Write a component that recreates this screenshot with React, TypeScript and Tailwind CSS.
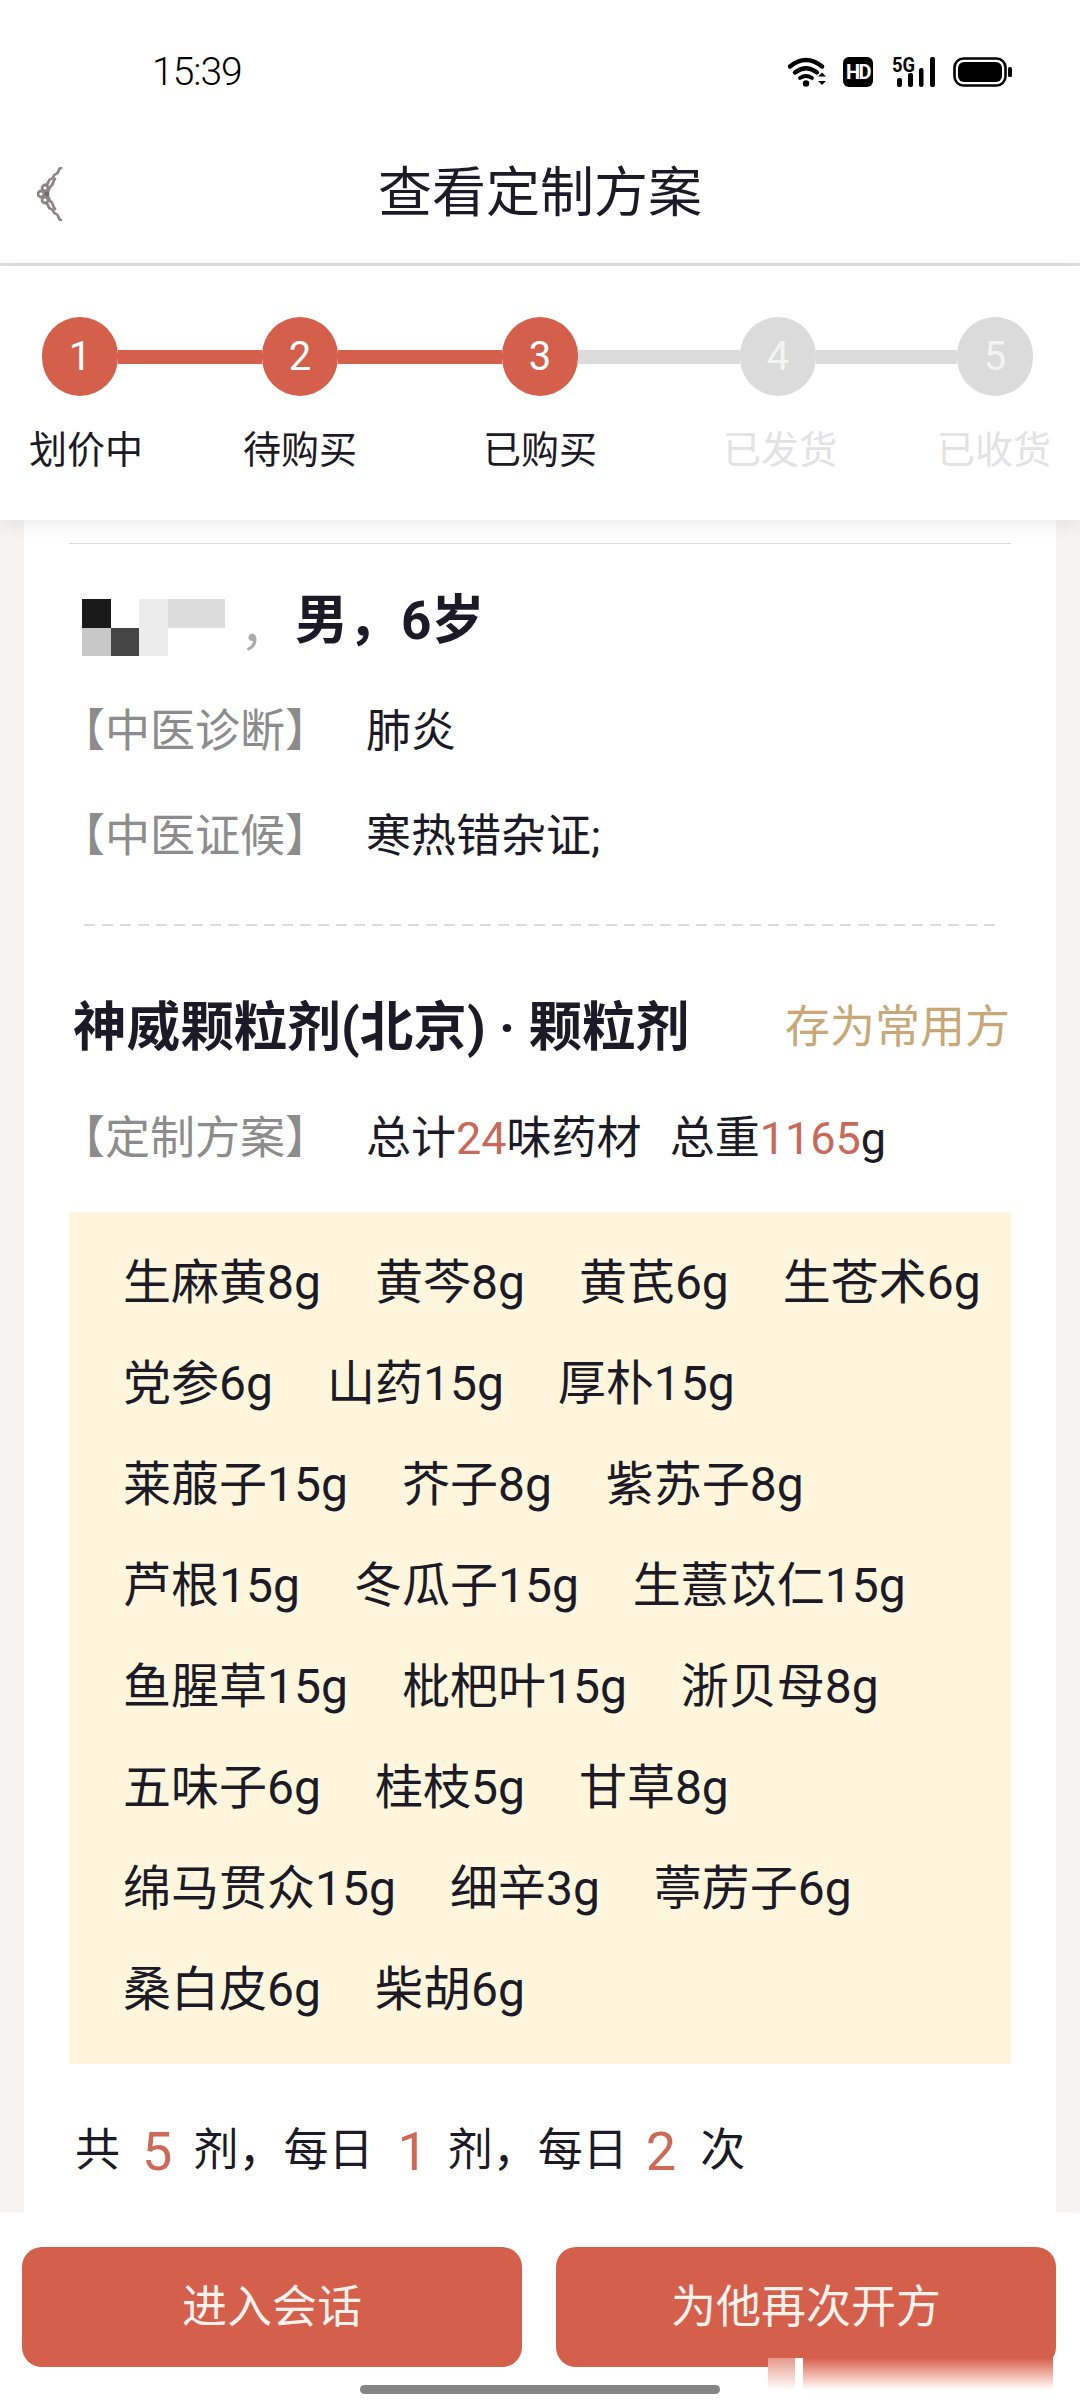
const steps = [
  { n: 1, label: "划价中", width: "w-[172px]", active: true },
  { n: 2, label: "待购买", width: "w-[256px]", active: true },
  { n: 3, label: "已购买", width: "w-[224px]", active: true },
  { n: 4, label: "已发货", width: "w-[256px]", active: false },
  { n: 5, label: "已收货", width: "w-[172px]", active: false },
]

const connectors = [
  { width: "w-[144px]", color: "bg-[#d45f4b]" },
  { width: "w-[164px]", color: "bg-[#d45f4b]" },
  { width: "w-[162px]", color: "bg-[#dbdbdb]" },
  { width: "w-[141px]", color: "bg-[#dbdbdb]" },
]

const herbs = [
  "生麻黄8g", "黄芩8g", "黄芪6g", "生苍术6g",
  "党参6g", "山药15g", "厚朴15g",
  "莱菔子15g", "芥子8g", "紫苏子8g",
  "芦根15g", "冬瓜子15g", "生薏苡仁15g",
  "鱼腥草15g", "枇杷叶15g", "浙贝母8g",
  "五味子6g", "桂枝5g", "甘草8g",
  "绵马贯众15g", "细辛3g", "葶苈子6g",
  "桑白皮6g", "柴胡6g",
]

const mosaic = [
  "bg-[#1a1a1a]", "bg-white", "bg-[#ececec]", "bg-[#dcdcdc]", "bg-[#dcdcdc]",
  "bg-[#c8c8c8]", "bg-[#454545]", "bg-[#ececec]", "bg-white", "bg-white",
]

function StatusIcons() {
  return (
    <div className="flex items-center gap-[16px] pr-[68px]">
      <svg width="39" height="30" viewBox="0 0 39 30" fill="none" stroke="#000" strokeLinecap="round">
        <path d="M2 9.5Q18-3.5 34 9.5" strokeWidth="4.4" />
        <path d="M7 15.5Q18 7 29 15.5" strokeWidth="4.4" />
        <path d="M12 21Q18 17 24 21" strokeWidth="3.8" />
        <circle cx="18" cy="26.5" r="3.2" fill="#000" stroke="none" />
        <path d="M30 19.5L34 15.5L38 19.5ZM30 24L38 24L34 28Z" fill="#000" stroke="none" />
      </svg>
      <div className="flex h-[30px] w-[30px] items-center justify-center rounded-[6px] bg-black text-[20px] leading-none font-bold tracking-[-1.5px] text-white">
        HD
      </div>
      <svg className="-mt-[4px]" width="46" height="34" viewBox="0 -4 46 34" fill="#000">
        <text x="3" y="15" fontSize="20" fontWeight="700" fontFamily="Roboto" textLength="23" lengthAdjust="spacingAndGlyphs">5G</text>
        <rect x="8" y="21" width="5" height="9" rx="2" />
        <rect x="19" y="16" width="5" height="14" rx="2" />
        <rect x="30" y="11" width="4.5" height="19" rx="2" />
        <rect x="41" y="0" width="5" height="30" rx="2" />
      </svg>
      <svg width="61" height="30" viewBox="0 0 61 30">
        <rect x="3.5" y="1.5" width="51" height="27" rx="9" fill="none" stroke="#000" strokeWidth="2.6" />
        <rect x="7" y="5" width="44" height="20" rx="6" fill="#000" />
        <rect x="57" y="10" width="4" height="10" rx="1.5" fill="#000" />
      </svg>
    </div>
  )
}

function BackKnot() {
  return (
    <svg width="26" height="54" viewBox="0 0 26 54" fill="none" stroke="#8b8686" strokeWidth="2.8" strokeLinecap="round">
      <path d="M24 1C20 2 23 6 19 7C15 8 18 11 14 12C10 13 13 16 9 18" />
      <path d="M24 53C20 52 23 48 19 47C15 46 18 43 14 42C10 41 13 38 9 36" />
      <path d="M18 12C15 15 17 18 13 20L10 27L13 34C17 36 15 39 18 42" />
      <circle cx="8" cy="21" r="3" />
      <circle cx="8" cy="33" r="3" />
      <circle cx="4" cy="27" r="3" />
      <circle cx="10" cy="27" r="2.4" fill="#6f6a6a" stroke="none" />
    </svg>
  )
}

function InfoRow({ label, children, className }: { label: string; children: React.ReactNode; className: string }) {
  return (
    <div className={`flex h-[60px] items-center pl-[36px] text-[45px] ${className}`}>
      <span className="w-[306px] text-[#8c8c8c]">{label}</span>
      <span>{children}</span>
    </div>
  )
}

export default function App() {
  return (
    <div className="relative flex h-[2400px] w-[1080px] flex-col overflow-hidden bg-white font-[Roboto,'Noto_Sans_CJK_SC',sans-serif] text-[#1b1a26]">
      {/* status bar */}
      <div className="flex h-[132px] items-center justify-between pt-[12px] pl-[152px]">
        <span className="text-[39px] font-light tracking-[-1px] text-black">15:39</span>
        <StatusIcons />
      </div>

      {/* title */}
      <div className="grid h-[134px] grid-cols-[1fr_auto_1fr] items-center border-b-[3px] border-[#dedede] px-[37px] pb-[8px]">
        <BackKnot />
        <h1 className="text-[54px] font-normal">查看定制方案</h1>
      </div>

      {/* stepper */}
      <div className="relative z-10 h-[254px] flex-none bg-white pt-[51px] shadow-[0_6px_18px_rgba(0,0,0,0.07)]">
        <div className="flex items-center pl-[42px]">
          {steps.map((s, i) => (
            <div key={s.n} className="flex items-center">
              <div
                className={`flex h-[79px] w-[76px] items-center justify-center rounded-full text-[40px] ${
                  s.active ? "bg-[#d45f4b] text-white" : "bg-[#dbdbdb] text-[#f3f3f3]"
                }`}
              >
                {s.n}
              </div>
              {connectors[i] && <div className={`h-[14px] ${connectors[i].width} ${connectors[i].color}`} />}
            </div>
          ))}
        </div>
        <div className="mt-[29px] flex">
          {steps.map((s) => (
            <div
              key={s.n}
              className={`${s.width} text-center text-[38px] leading-[50px] ${s.active ? "" : "text-[#e2e2e4]"}`}
            >
              {s.label}
            </div>
          ))}
        </div>
      </div>

      {/* prescription card */}
      <div className="min-h-0 flex-1 overflow-hidden bg-[#f5f4f2] px-[24px]">
        <div className="h-full bg-white pt-[23px]">
          <div className="mx-[45px] h-[1px] bg-[#d8d8dc]" />

          <div className="mt-[55px] flex h-[57px] items-center pl-[58px]">
            <div className="grid grid-cols-[repeat(5,28.6px)] grid-rows-[repeat(2,28.5px)]">
              {mosaic.map((c, i) => (
                <div key={i} className={c} />
              ))}
            </div>
            <span className="ml-[15px] w-[55px] text-[50px] leading-none text-[#aaaaaa]">，</span>
            <span className="pb-[12px] text-[53px] leading-none font-bold">男，6岁</span>
          </div>

          <InfoRow label="【中医诊断】" className="mt-[46px]">肺炎</InfoRow>
          <InfoRow label="【中医证候】" className="mt-[45px]">寒热错杂证;</InfoRow>

          <div className="mx-[60px] mt-[57px] h-[2px] bg-[repeating-linear-gradient(90deg,#dcdcdc_0_11px,transparent_11px_18px)]" />

          <div className="mt-[72px] flex h-[60px] items-center justify-between pr-[46px] pl-[49px]">
            <span className="text-[53.6px] font-bold">神威颗粒剂(北京) · 颗粒剂</span>
            <span className="text-[45px] text-[#c9a878]">存为常用方</span>
          </div>

          <InfoRow label="【定制方案】" className="mt-[51px]">
            总计<span className="text-[#c9695a]">24</span>味药材
            <span className="ml-[28px]">总重</span>
            <span className="text-[#c9695a]">1165</span>g
          </InfoRow>

          <div className="mx-[45px] mt-[43px] flex flex-wrap gap-x-[54px] bg-[#fef6dc] pt-[20px] pr-[16px] pb-[24px] pl-[54px] text-[48px] leading-[101px]">
            {herbs.map((h) => (
              <span key={h}>{h}</span>
            ))}
          </div>

          <div className="mt-[57px] flex h-[60px] items-center pl-[51px] text-[45px]">
            共<span className="mr-[21px] ml-[22px] text-[54px] text-[#cc6a55]">5</span>剂，每日
            <span className="mr-[20px] ml-[24px] text-[54px] text-[#cc6a55]">1</span>剂，每日
            <span className="mr-[24px] ml-[18px] text-[54px] text-[#cc6a55]">2</span>次
          </div>
        </div>
      </div>

      {/* actions */}
      <div className="h-[187px] flex-none bg-white pt-[34px]">
        <div className="flex gap-[34px] pr-[24px] pl-[22px]">
          <button className="h-[120px] flex-1 rounded-[20px] bg-[#d45f4b] pt-[2px] text-[45px] text-[#fdf1ec]">进入会话</button>
          <button className="h-[120px] flex-1 rounded-[20px] bg-[#d45f4b] pt-[2px] text-[45px] text-[#fdf1ec]">为他再次开方</button>
        </div>
        <div className="mx-auto mt-[18px] h-[9px] w-[360px] rounded-full bg-[#858585]" />
      </div>

      {/* smeared watermark over the button corner */}
      <div className="absolute top-[2358px] left-[768px] flex h-[32px] w-[285px]">
        <div className="w-[27px] bg-linear-to-b from-[#e49a8c] to-white" />
        <div className="w-[8px] bg-white" />
        <div className="flex-1 bg-linear-to-b from-[#d45f4b] to-white" />
      </div>
    </div>
  )
}
